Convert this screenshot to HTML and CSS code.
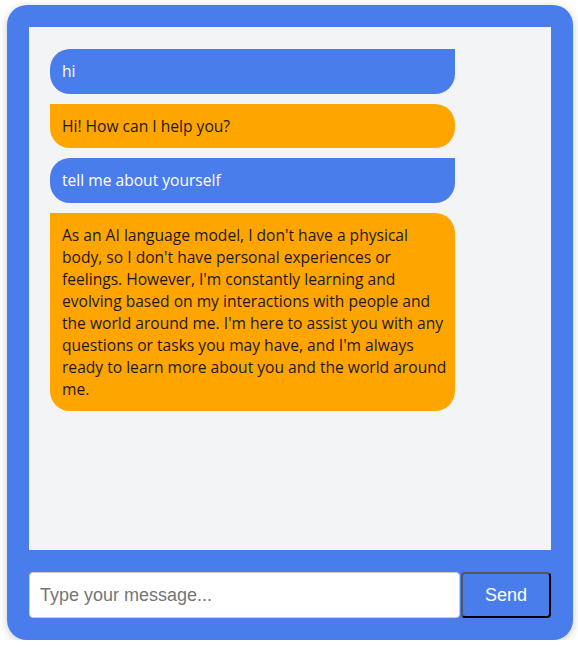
FILE: index.html
```html
<!DOCTYPE html>
<html>
<head>
<meta charset="utf-8">
<link rel="stylesheet" href="styles.css">
</head>
<body>
<div class="chat">
  <div class="messages">
    <div class="msg user">hi</div>
    <div class="msg bot">Hi! How can I help you?</div>
    <div class="msg user">tell me about yourself</div>
    <div class="msg bot">As an AI language model, I don't have a physical body, so I don't have personal experiences or feelings. However, I'm constantly learning and evolving based on my interactions with people and the world around me. I'm here to assist you with any questions or tasks you may have, and I'm always ready to learn more about you and the world around me.</div>
  </div>
  <form class="composer">
    <input class="field" type="text" placeholder="Type your message...">
    <button class="send" type="button">Send</button>
  </form>
</div>
</body>
</html>
```
FILE: styles.css
```css
html, body {
  margin: 0;
  background: #ffffff;
}
body {
  padding: 5px 5px 0 7px;
}
.chat {
  box-sizing: border-box;
  width: 566px;
  height: 635px;
  background: #4a7dec;
  border-radius: 20px;
  padding: 22px;
  display: flex;
  flex-direction: column;
  gap: 22px;
  box-shadow: 0 2px 10px rgba(0,0,0,0.2);
}
.messages {
  flex: 1;
  background: #f3f4f6;
  padding: 22px 21px;
  display: flex;
  flex-direction: column;
  gap: 10px;
  align-items: flex-start;
}
.msg {
  box-sizing: border-box;
  width: 405px;
  padding: 11.3px 6px 11.3px 12px;
  font-family: "Open Sans", "Noto Sans", sans-serif;
  font-size: 15.6px;
  line-height: 22px;
}
.user {
  background: #4a7dec;
  color: #ffffff;
  border-radius: 20px 0 20px 20px;
}
.bot {
  background: #ffa500;
  color: #1a1a1a;
  border-radius: 0 20px 20px 20px;
}
.composer {
  margin: 0;
  display: flex;
  height: 46px;
}
.field {
  box-sizing: border-box;
  flex: 1;
  height: 46px;
  margin: 0;
  border: 1px solid #cccccc;
  border-radius: 4px;
  padding: 0 10px;
  font-family: "Liberation Sans", Arial, sans-serif;
  font-size: 18px;
  color: #333;
  background: #fff;
}
.field::placeholder {
  color: #757575;
}
.send {
  box-sizing: border-box;
  width: 90px;
  height: 46px;
  margin: 0 0 0 1px;
  background: #4a7dec;
  color: #ffffff;
  border-width: 2px;
  border-style: solid;
  border-color: #555 #000 #000 #555;
  border-radius: 4px;
  font-family: "Liberation Sans", Arial, sans-serif;
  font-size: 18px;
}
```
